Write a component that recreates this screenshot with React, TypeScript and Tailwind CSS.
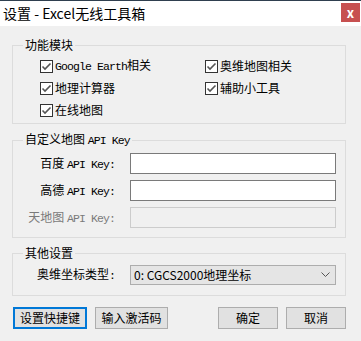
import React from "react";

function Check() {
  return (
    <svg width="13" height="13" viewBox="0 0 13 13" className="shrink-0">
      <rect x="0.5" y="0.5" width="12" height="12" fill="#ffffff" stroke="#333333" />
      <polyline points="2.5,6.5 5,9 10.5,3.5" fill="none" stroke="#555555" strokeWidth="1.6" />
    </svg>
  );
}

function CheckItem({ children }: { children: React.ReactNode }) {
  return (
    <div className="flex h-[22px] items-center gap-[2px]">
      <Check />
      <span className="text-[12px] leading-[16px] whitespace-nowrap">{children}</span>
    </div>
  );
}

const Mono = ({ children }: { children: React.ReactNode }) => (
  <span className="font-['Liberation_Mono',monospace] text-[11.5px] tracking-[-0.9px]">{children}</span>
);

export default function App() {
  return (
    <div className="relative h-[341px] w-[361px] overflow-hidden bg-[#f0f0f0] font-['Noto_Sans_CJK_SC',sans-serif] text-black">
      {/* title bar */}
      <div className="flex h-[26px] items-start justify-between border-t border-[#2f3f4f] bg-white">
        <div className="pl-[3px] text-[14px] leading-[24px]">设置 - Excel无线工具箱</div>
        <div className="mr-[1px] mt-[2px] flex h-[19px] w-[19px] items-center justify-center bg-[#c75050] text-[13px] font-bold leading-none text-white">
          x
        </div>
      </div>

      {/* group 1 */}
      <fieldset className="ml-[12px] mt-[11px] w-[334px] min-w-0 border border-[#dcdcdc] pb-[2px] pt-[2px]">
        <legend className="ml-[10px] px-[2px] text-[12px] leading-[16px]">功能模块</legend>
        <div className="grid grid-cols-[165px_1fr] pl-[27px]">
          <CheckItem>
            <Mono>Google Earth</Mono>相关
          </CheckItem>
          <CheckItem>奥维地图相关</CheckItem>
          <CheckItem>地理计算器</CheckItem>
          <CheckItem>辅助小工具</CheckItem>
          <CheckItem>在线地图</CheckItem>
        </div>
      </fieldset>

      {/* group 2 */}
      <fieldset className="ml-[12px] mt-[7px] w-[334px] min-w-0 border border-[#dcdcdc] pb-[9px] pt-[4px]">
        <legend className="ml-[10px] px-[2px] text-[12px] leading-[16px]">
          自定义地图 <Mono>API Key</Mono>
        </legend>
        <div className="flex flex-col gap-[6px]">
          <div className="flex items-center gap-[15px]">
            <div className="w-[102px] text-right text-[12px] leading-[16px]">
              百度 <Mono>API Key:</Mono>
            </div>
            <div className="h-[21px] w-[206px] border border-[#7a7a7a] bg-white" />
          </div>
          <div className="flex items-center gap-[15px]">
            <div className="w-[102px] text-right text-[12px] leading-[16px]">
              高德 <Mono>API Key:</Mono>
            </div>
            <div className="h-[21px] w-[206px] border border-[#7a7a7a] bg-white" />
          </div>
          <div className="flex items-center gap-[15px]">
            <div className="w-[102px] text-right text-[12px] leading-[16px] text-[#7a7a7a]">
              天地图 <Mono>API Key:</Mono>
            </div>
            <div className="h-[21px] w-[206px] border border-[#cccccc] bg-[#f0f0f0]" />
          </div>
        </div>
      </fieldset>

      {/* group 3 */}
      <fieldset className="ml-[12px] mt-[7px] w-[334px] min-w-0 border border-[#dcdcdc] pb-[10px] pt-[4px]">
        <legend className="ml-[10px] px-[2px] text-[12px] leading-[16px]">其他设置</legend>
        <div className="flex items-center gap-[15px]">
          <div className="w-[102px] text-right text-[12px] leading-[16px]">
            奥维坐标类型<Mono>:</Mono>
          </div>
          <div className="flex h-[20px] w-[206px] items-center justify-between border border-[#adadad] bg-[#e5e5e5] pl-[3px] pr-[5px]">
            <span className="text-[12px] leading-[16px]">0: CGCS2000地理坐标</span>
            <svg width="9" height="6" viewBox="0 0 9 6">
              <polyline points="0.5,0.5 4.5,4.5 8.5,0.5" fill="none" stroke="#555555" strokeWidth="1" />
            </svg>
          </div>
        </div>
      </fieldset>

      {/* buttons */}
      <div className="ml-[13px] mt-[11px] flex w-[333px] justify-between">
        <div className="flex gap-[8px]">
          <div className="flex h-[22px] w-[74px] items-center justify-center border-2 border-[#0078d7] bg-[#e1e1e1] text-[12px] leading-[16px]">
            设置快捷键
          </div>
          <div className="flex h-[22px] w-[73px] items-center justify-center border border-[#adadad] bg-[#e1e1e1] text-[12px] leading-[16px]">
            输入激活码
          </div>
        </div>
        <div className="flex gap-[8px]">
          <div className="flex h-[22px] w-[60px] items-center justify-center border border-[#adadad] bg-[#e1e1e1] text-[12px] leading-[16px]">
            确定
          </div>
          <div className="flex h-[22px] w-[60px] items-center justify-center border border-[#adadad] bg-[#e1e1e1] text-[12px] leading-[16px]">
            取消
          </div>
        </div>
      </div>
    </div>
  );
}
